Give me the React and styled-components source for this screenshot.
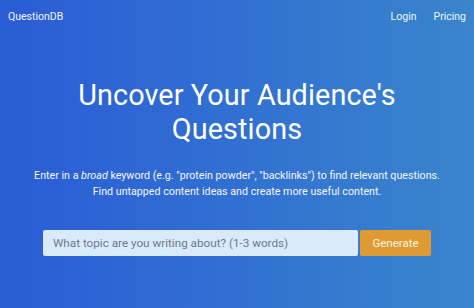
import React from "react";
import styled, { createGlobalStyle } from "styled-components";

const GlobalStyle = createGlobalStyle`
  html, body {
    margin: 0;
    padding: 0;
  }
  body {
    font-family: Roboto, "Liberation Sans", sans-serif;
  }
`;

const App = () => {
  return (
    <Page>
      <GlobalStyle />
      <NavBar>
        <Brand>QuestionDB</Brand>
        <NavLinks>
          <NavLink>Login</NavLink>
          <NavLink>Pricing</NavLink>
        </NavLinks>
      </NavBar>
      <Hero>
        <Title>
          Uncover Your Audience's
          <br />
          Questions
        </Title>
        <Lead>
          Enter in a <em>broad</em> keyword (e.g. "protein powder", "backlinks") to find relevant questions.
          <br />
          Find untapped content ideas and create more useful content.
        </Lead>
        <SearchForm onSubmit={(e) => e.preventDefault()}>
          <SearchInput placeholder="What topic are you writing about? (1-3 words)" />
          <GenerateButton type="submit">Generate</GenerateButton>
        </SearchForm>
      </Hero>
    </Page>
  );
};

const Page = styled.div`
  width: 474px;
  height: 308px;
  overflow: hidden;
  background: linear-gradient(90deg, #2a5cd6 0%, #3170d2 50%, #3a85cc 100%);
  color: #fff;
`;

const NavBar = styled.div`
  height: 32px;
  padding: 0 8px;
  display: flex;
  align-items: center;
  justify-content: space-between;
  font-size: 10.5px;
`;

const Brand = styled.div`
  color: #f2f6ff;
`;

const NavLinks = styled.div`
  display: flex;
  gap: 17px;
`;

const NavLink = styled.span`
  color: #f2f6ff;
  cursor: pointer;
`;

const Hero = styled.div`
  display: flex;
  flex-direction: column;
  align-items: center;
  padding-top: 46px;
`;

const Title = styled.h1`
  margin: 0;
  font-size: 28.8px;
  font-weight: 400;
  line-height: 34px;
  text-align: center;
  letter-spacing: 0.1px;
`;

const Lead = styled.p`
  margin: 22px 0 0;
  font-size: 10.7px;
  line-height: 16px;
  text-align: center;
  color: #f4f7ff;

  em {
    font-style: italic;
  }
`;

const SearchForm = styled.form`
  margin-top: 30px;
  display: flex;
  gap: 2px;
`;

const SearchInput = styled.input`
  width: 315px;
  height: 26px;
  box-sizing: border-box;
  border: none;
  border-radius: 2px;
  padding: 0 10px;
  background: #dbeafb;
  font-family: Roboto, "Liberation Sans", sans-serif;
  font-size: 11.7px;
  outline: none;

  &::placeholder {
    color: #6c7a8c;
  }
`;

const GenerateButton = styled.button`
  width: 71px;
  height: 26px;
  border: none;
  border-radius: 2px;
  background: #e09a34;
  color: #fdf3e0;
  font-family: Roboto, "Liberation Sans", sans-serif;
  font-size: 11.5px;
  cursor: pointer;
`;

export default App;
